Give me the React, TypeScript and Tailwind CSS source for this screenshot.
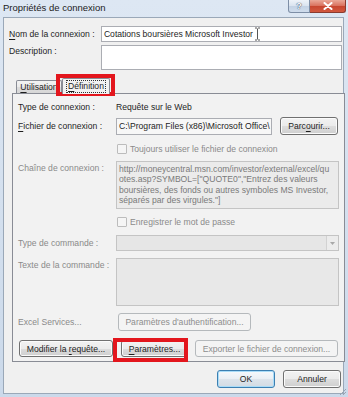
import React from "react";

type BtnProps = {
  children: React.ReactNode;
  className?: string;
  disabled?: boolean;
  def?: boolean;
};

function Btn({ children, className = "", disabled = false, def = false }: BtnProps) {
  const look = disabled
    ? "border-[#b5b9bc] bg-[#f4f4f4] text-[#8d8d8d]"
    : def
    ? "border-[#3c7fb1] bg-[linear-gradient(#f6f9fc,#eaeff4_50%,#dde4eb_51%,#d3dbe3)] shadow-[inset_0_0_0_1px_#a9dcf8] text-[#1e1e1e]"
    : "border-[#707070] bg-[linear-gradient(#f2f2f2,#ebebeb_50%,#dddddd_51%,#cfcfcf)] shadow-[inset_0_0_0_1px_#fbfbfb] text-[#1e1e1e]";
  return (
    <div className={`flex shrink-0 items-center justify-center whitespace-nowrap rounded-[3px] border ${look} ${className}`}>
      {children}
    </div>
  );
}

function U({ children }: { children: React.ReactNode }) {
  return <span className="underline decoration-[0.8px] underline-offset-[1.5px]">{children}</span>;
}

function Check({ label }: { label: string }) {
  return (
    <div className="flex items-center">
      <div className="ml-[1px] h-[10px] w-[10px] rounded-[1px] border border-[#bcbcbc] bg-[#f5f5f5]" />
      <div className="ml-[3px] text-[#8a8a8a]">{label}</div>
    </div>
  );
}

export default function App() {
  return (
    <div className="relative h-[397px] w-[348px] overflow-hidden bg-[linear-gradient(180deg,#dde7f3,#cbd9ea)] font-['Liberation_Sans',Arial,sans-serif] text-[8.6px] leading-[12px] text-[#1e1e1e]">
      {/* title bar */}
      <div className="flex h-[17px] items-start">
        <div className="pl-[3px] pt-[2px] text-[9.5px] leading-[12px] text-[#1b1b1b]">Propriétés de connexion</div>
        <div className="ml-auto mr-[2px] flex">
          <div className="flex h-[13px] w-[22px] items-center justify-center rounded-bl-[3px] border border-t-0 border-[#7d8ea6] bg-[linear-gradient(#eef3f9,#d9e3ef_50%,#c3d2e4_51%,#cfdcec)] text-[9px] font-bold leading-none text-white [text-shadow:0_0_1px_#33455e,0_0_1px_#33455e]">
            ?
          </div>
          <div className="flex h-[13px] w-[36px] items-center justify-center rounded-br-[3px] border border-l-0 border-t-0 border-[#8a3b2f] bg-[linear-gradient(#eaa898,#d9705c_50%,#c7452f_51%,#d2593f)]">
            <svg width="10" height="8" viewBox="0 0 10 8">
              <path d="M1.5 1 L8.5 7 M8.5 1 L1.5 7" stroke="#ffffff" strokeWidth="2" strokeLinecap="round" />
            </svg>
          </div>
        </div>
      </div>

      {/* client area */}
      <div className="ml-[3px] flex h-[377px] w-[341px] flex-col border border-[#9aa8b8] bg-[#f0f0f0] pl-[4px] pr-[1px]">
        {/* Nom */}
        <div className="mt-[8px] flex h-[16px] items-center">
          <div className="w-[94px] pl-[1px]">
            <U>N</U>om de la connexion :
          </div>
          <div className="flex h-[16px] w-[244px] items-center overflow-hidden whitespace-nowrap border border-[#abadb3] bg-white pl-[2px]">
            Cotations boursières Microsoft Investor
          </div>
        </div>
        {/* Description */}
        <div className="mt-[3px] flex">
          <div className="w-[94px] pl-[1px]">Description :</div>
          <div className="h-[25px] w-[244px] border border-[#abadb3] bg-white" />
        </div>

        {/* Tabs */}
        <div className="mt-[6px] flex h-[17px] items-end pl-[8px]">
          <div className="flex h-[13px] w-[46px] items-center justify-center rounded-t-[2px] border border-b-0 border-[#898c95] bg-[linear-gradient(#f3f3f3,#ebebeb_50%,#dddddd_51%,#d6d6d6)]">
            <span>
              <U>U</U>tilisation
            </span>
          </div>
          <div className="relative z-10 -mb-[1px] flex h-[16px] w-[48px] items-center justify-center rounded-t-[2px] border border-b-0 border-[#898c95] bg-[#f2f2f2]">
            <span className="border border-dotted border-[#333] px-[1px] leading-[11px]">
              <U>D</U>éfinition
            </span>
          </div>
        </div>

        {/* Panel */}
        <div className="ml-[4px] flex h-[269px] w-[333px] flex-col border border-[#898c95] bg-[#f2f2f2] px-[5px]">
          {/* Type de connexion */}
          <div className="mt-[6px] flex h-[13px] items-center">
            <div className="w-[98px]">Type de connexion :</div>
            <div>Requête sur le Web</div>
          </div>
          {/* Fichier */}
          <div className="mt-[4px] flex h-[18px] items-center">
            <div className="w-[98px]">
              <U>F</U>ichier de connexion :
            </div>
            <div className="flex h-[17px] w-[156px] items-center overflow-hidden whitespace-nowrap border border-[#abadb3] bg-[#f7f7f7] pl-[2px]">
              {"C:\\Program Files (x86)\\Microsoft Office\\"}
            </div>
            <Btn className="ml-[8px] h-[18px] w-[58px]">
              <span>
                Parc<U>o</U>urir...
              </span>
            </Btn>
          </div>
          {/* Toujours */}
          <div className="mt-[8px] flex h-[11px] items-center pl-[98px]">
            <Check label="Toujours utiliser le fichier de connexion" />
          </div>
          {/* Chaîne */}
          <div className="mt-[7px] flex">
            <div className="w-[98px] pt-[1px] text-[#8a8a8a]">Chaîne de connexion :</div>
            <div className="h-[48px] w-[223px] overflow-hidden border border-[#c4c4c4] bg-[#ebebeb] pl-[2px] pt-[2px] text-[#7a7a7a] leading-[10.4px] whitespace-nowrap">
              <div>http://moneycentral.msn.com/investor/external/excel/qu</div>
              <div>otes.asp?SYMBOL=["QUOTE0","Entrez des valeurs</div>
              <div>boursières, des fonds ou autres symboles MS Investor,</div>
              <div>séparés par des virgules."]</div>
            </div>
          </div>
          {/* Enregistrer */}
          <div className="mt-[8px] flex h-[10px] items-center pl-[98px]">
            <Check label="Enregistrer le mot de passe" />
          </div>
          {/* Type de commande */}
          <div className="mt-[8px] flex h-[16px] items-center">
            <div className="w-[98px] text-[#8a8a8a]">Type de commande :</div>
            <div className="flex h-[16px] w-[223px] justify-end border border-[#c4c4c4] bg-[#e6e6e6]">
              <div className="flex h-full w-[12px] items-center justify-center border-l border-[#d2d2d2] bg-[#ececec]">
                <svg width="5" height="3" viewBox="0 0 5 3">
                  <path d="M0 0 H5 L2.5 3 Z" fill="#a8a8a8" />
                </svg>
              </div>
            </div>
          </div>
          {/* Texte */}
          <div className="mt-[7px] flex">
            <div className="w-[98px] pt-[1px] text-[#8a8a8a]">Texte de la commande :</div>
            <div className="h-[48px] w-[223px] border border-[#c4c4c4] bg-[#e8e8e8]" />
          </div>
          {/* Excel Services */}
          <div className="mt-[7px] flex h-[18px] items-center">
            <div className="w-[98px] text-[#8a8a8a]">Excel Services...</div>
            <Btn disabled className="ml-[2px] h-[18px] w-[133px]">
              Paramètres d'authentification...
            </Btn>
          </div>
          {/* Bottom buttons */}
          <div className="mt-[9px] flex h-[17px] items-center">
            <Btn className="ml-[1px] h-[17px] w-[94px]">
              <span>
                Modifier la <U>r</U>equête...
              </span>
            </Btn>
            <Btn className="ml-[8px] h-[17px] w-[67px]">
              <span>
                <U>P</U>aramètres...
              </span>
            </Btn>
            <Btn disabled className="ml-[7px] h-[17px] w-[143px]">
              Exporter le fichier de connexion...
            </Btn>
          </div>
        </div>

        {/* OK / Annuler */}
        <div className="mt-[8px] flex justify-end gap-[8px] pr-[1px]">
          <Btn def className="h-[18px] w-[58px]">
            OK
          </Btn>
          <Btn className="h-[18px] w-[58px]">Annuler</Btn>
        </div>
      </div>

      {/* red highlight boxes */}
      <div className="absolute left-[56px] top-[74px] h-[22px] w-[59px] border-4 border-[#e3161d]" />
      <div className="absolute left-[113px] top-[338px] h-[24px] w-[75px] border-4 border-[#e3161d]" />

      {/* I-beam cursor */}
      <svg className="absolute left-[254px] top-[27px]" width="7" height="14" viewBox="0 0 7 14">
        <path d="M1 1 H3 M4 1 H6 M3.5 1.5 V12.5 M1 13 H3 M4 13 H6" stroke="#555" strokeWidth="1" fill="none" />
      </svg>

      {/* resize grip */}
      <svg className="absolute bottom-[1px] right-[1px]" width="9" height="9" viewBox="0 0 9 9">
        <path d="M8 2 L2 8 M8 5 L5 8" stroke="#9aa5b2" strokeWidth="1" />
      </svg>
    </div>
  );
}
